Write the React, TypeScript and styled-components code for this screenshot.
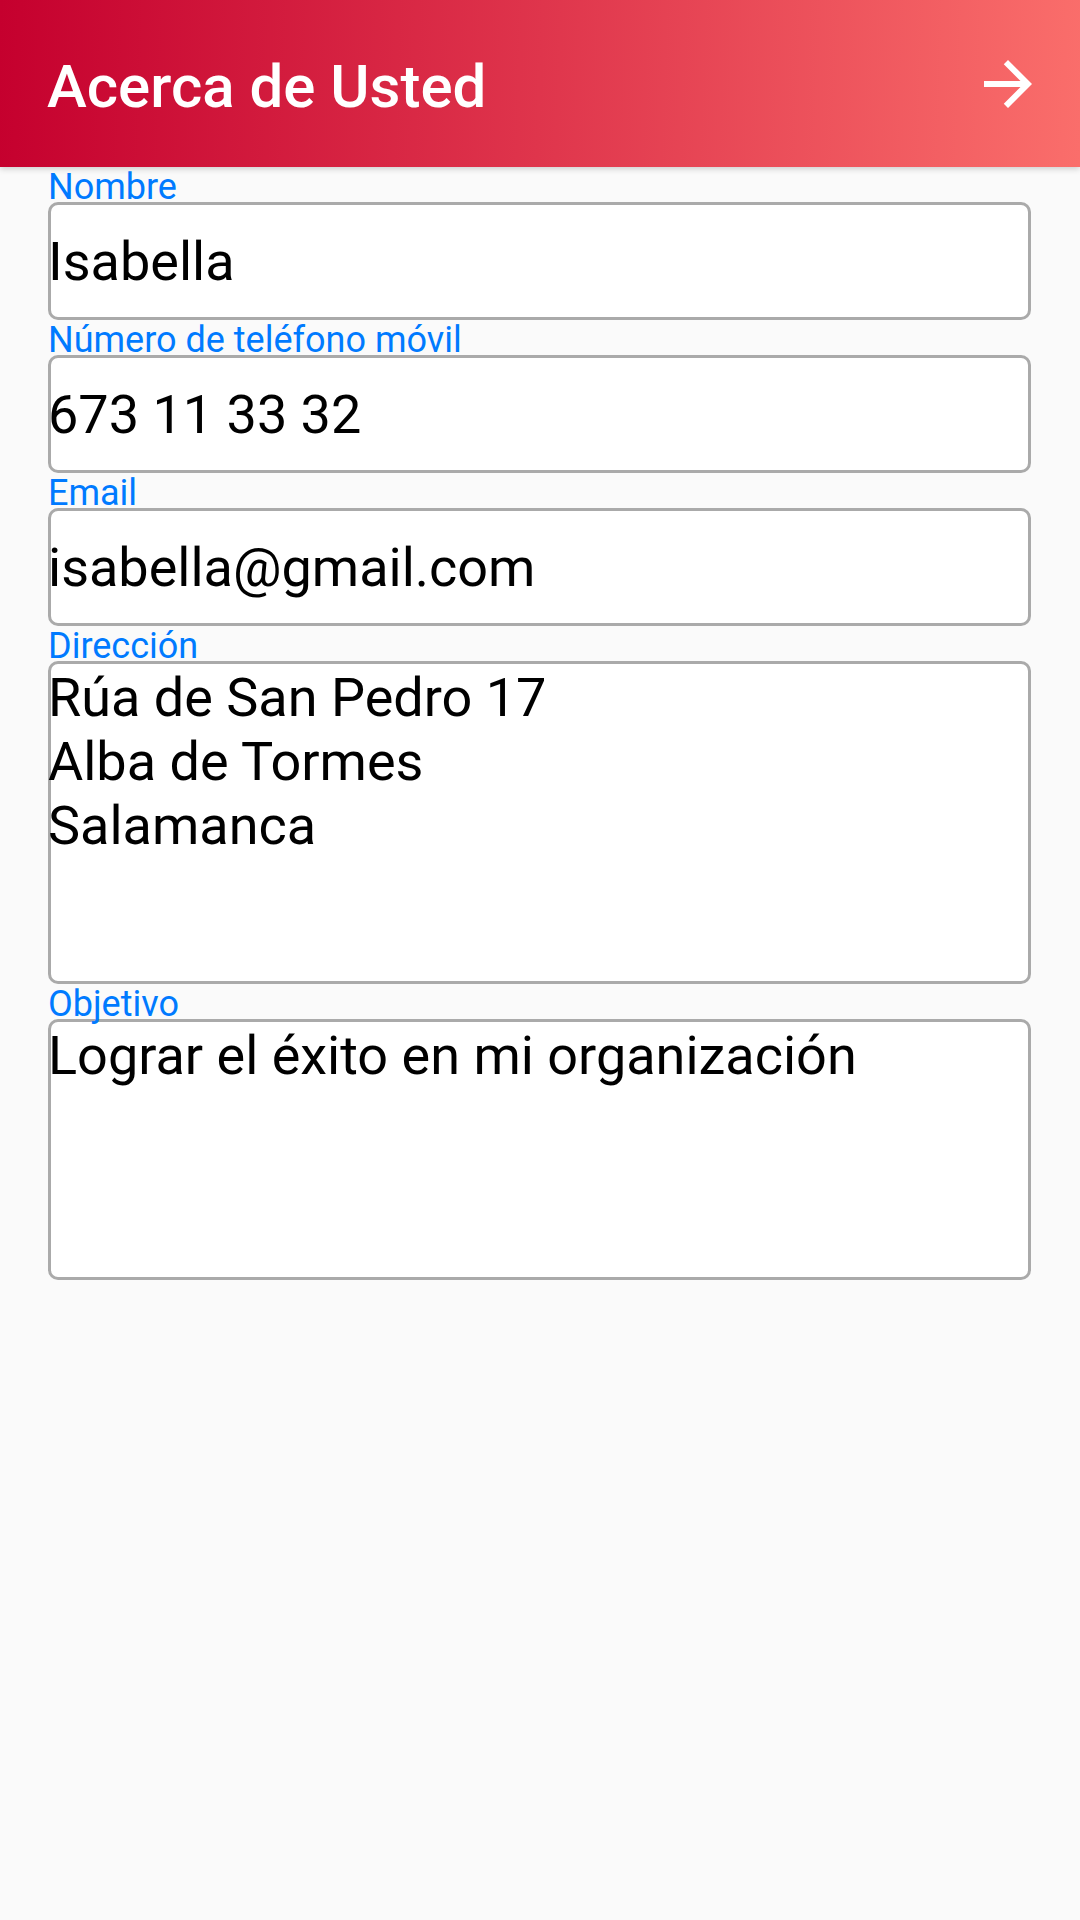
import styled, {createGlobalStyle} from "styled-components";

const GlobalStyle = createGlobalStyle`
    html, body {
        margin: 0;
        padding: 0;
        background: #fafafa;
        font-family: Roboto, "Noto Sans", sans-serif;
    }
`;

const Screen = styled.div`
    width: 1080px;
    min-height: 1920px;
    background: #fafafa;
    display: flex;
    flex-direction: column;
`;

const Header = styled.header`
    height: 167px;
    display: flex;
    flex-direction: row;
    align-items: center;
    justify-content: space-between;
    padding: 0 36px 0 47px;
    background: linear-gradient(92deg, #c5002e 0%, #df354c 50%, #fa6e6b 100%);
    box-shadow: 0 2px 6px rgba(0, 0, 0, 0.18);
    position: relative;
    z-index: 2;
`;

const Title = styled.h1`
    margin: 0;
    padding-top: 6px;
    color: #ffffff;
    font-family: Roboto, sans-serif;
    font-weight: 500;
    font-size: 60px;
`;

const NextButton = styled.button`
    width: 72px;
    height: 72px;
    padding: 0;
    border: none;
    background: none;
    display: flex;
    align-items: center;
    justify-content: center;
    cursor: pointer;
`;

const Form = styled.div`
    display: flex;
    flex-direction: column;
    padding: 0 49px 0 48px;
`;

const Field = styled.label`
    display: flex;
    flex-direction: column;
`;

const Caption = styled.span`
    display: block;
    height: 35px;
    line-height: 40px;
    font-size: 36px;
    color: #007aff;
    position: relative;
    z-index: 1;
    white-space: nowrap;
`;

const Frame = styled.div<{ $height: number }>`
    box-sizing: border-box;
    height: ${p => p.$height}px;
    border: 3px solid #aaaaaa;
    border-radius: 10px;
    background: #ffffff;
    display: flex;
`;

const TextBox = styled.input`
    box-sizing: border-box;
    height: 100%;
    width: calc(100% + 3px);
    margin: 0 0 0 -3px;
    padding: 0;
    border: none;
    background: transparent;
    color: #000000;
    font-family: Roboto, sans-serif;
    font-size: 54px;
    outline: none;
`;

const TextArea = styled.textarea`
    box-sizing: border-box;
    height: 100%;
    width: calc(100% + 3px);
    margin: 0 0 0 -3px;
    padding: 2px 0 0 0;
    border: none;
    background: transparent;
    color: #000000;
    font-family: Roboto, sans-serif;
    font-size: 54px;
    line-height: 64px;
    resize: none;
    overflow: hidden;
    outline: none;
`;

export default function App() {
    return (
        <Screen>
            <GlobalStyle/>
            <Header>
                <Title>Acerca de Usted</Title>
                <NextButton aria-label="Siguiente">
                    <svg width="72" height="72" viewBox="0 0 24 24" fill="#ffffff">
                        <path d="M12 4l-1.41 1.41L16.17 11H4v2h12.17l-5.58 5.59L12 20l8-8z"/>
                    </svg>
                </NextButton>
            </Header>
            <Form>
                <Field>
                    <Caption>Nombre</Caption>
                    <Frame $height={118}>
                        <TextBox readOnly value="Isabella"/>
                    </Frame>
                </Field>
                <Field>
                    <Caption>Número de teléfono móvil</Caption>
                    <Frame $height={118}>
                        <TextBox readOnly value="673 11 33 32"/>
                    </Frame>
                </Field>
                <Field>
                    <Caption>Email</Caption>
                    <Frame $height={118}>
                        <TextBox readOnly value="isabella@gmail.com"/>
                    </Frame>
                </Field>
                <Field>
                    <Caption>Dirección</Caption>
                    <Frame $height={323}>
                        <TextArea readOnly value={"Rúa de San Pedro 17\nAlba de Tormes\nSalamanca"}/>
                    </Frame>
                </Field>
                <Field>
                    <Caption>Objetivo</Caption>
                    <Frame $height={261}>
                        <TextArea readOnly value="Lograr el éxito en mi organización"/>
                    </Frame>
                </Field>
            </Form>
        </Screen>
    );
}
